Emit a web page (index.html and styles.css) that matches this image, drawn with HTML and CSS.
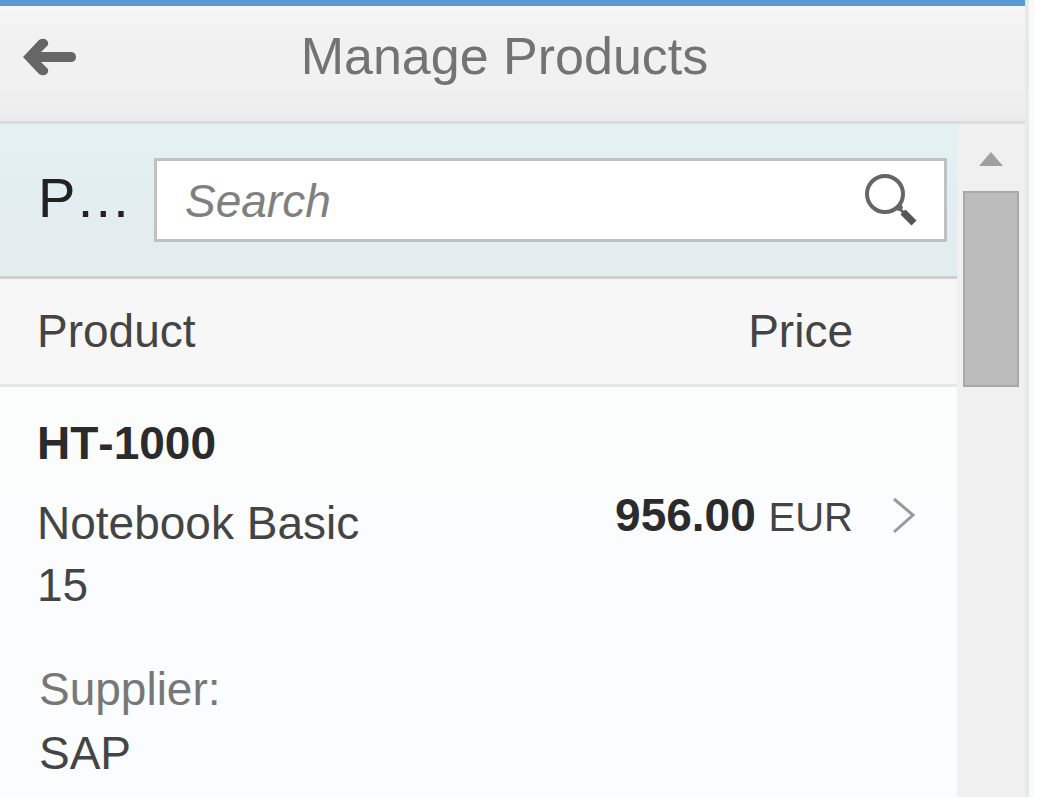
FILE: index.html
```html
<!DOCTYPE html>
<html lang="en">
<head>
<meta charset="utf-8">
<meta name="viewport" content="width=device-width, initial-scale=1">
<title>Manage Products</title>
<link rel="stylesheet" href="styles.css">
</head>
<body>
<div class="app">
  <header class="app-header">
    <button class="icon-button back" type="button" aria-label="Back">
      <svg width="56" height="40" viewBox="0 0 56 40" aria-hidden="true">
        <path d="M1 21L17 4Q20 2 23 3Q27 5 26 9L19 16H50Q54 17 54 21Q54 25 50 26H19L26 33Q27 37 23 39Q20 40 17 38Z" fill="#666"/>
      </svg>
    </button>
    <h1 class="title">Manage Products</h1>
  </header>
  <div class="body">
    <main class="content">
      <div class="toolbar">
        <h2 class="toolbar-title">P…</h2>
        <form class="search" role="search">
          <input class="search-input" type="search" placeholder="Search" aria-label="Search">
          <button class="icon-button" type="button" aria-label="Start search">
            <svg width="56" height="56" viewBox="0 0 56 56" aria-hidden="true">
              <circle cx="21" cy="22" r="18" fill="none" stroke="#666" stroke-width="4"/>
              <path d="M30 38L37 30L39 36L36 39Z" fill="#666"/>
              <path d="M35 36L40 41" stroke="#666" stroke-width="3"/>
              <path d="M39 40L50 51" stroke="#555" stroke-width="7"/>
            </svg>
          </button>
        </form>
      </div>
      <table class="products">
        <thead>
          <tr>
            <th class="col-product" scope="col">Product</th>
            <th class="col-price" scope="col">Price</th>
            <td class="col-nav"></td>
          </tr>
        </thead>
        <tbody>
          <tr>
            <td class="col-product">
              <div class="product-id">HT-1000</div>
              <div class="product-name">Notebook Basic 15</div>
            </td>
            <td class="col-price"><span class="amount">956.00</span> <span class="currency">EUR</span></td>
            <td class="col-nav">
              <button class="icon-button" type="button" aria-label="Open HT-1000">
                <svg width="28" height="40" viewBox="0 0 28 40" aria-hidden="true">
                  <path d="M3 3L22 19L3 36" fill="none" stroke="#999" stroke-width="3"/>
                </svg>
              </button>
            </td>
          </tr>
          <tr>
            <td class="supplier" colspan="3">
              <div class="supplier-label">Supplier:</div>
              <div>SAP</div>
            </td>
          </tr>
        </tbody>
      </table>
    </main>
    <div class="scrollbar" aria-hidden="true">
      <svg class="scroll-arrow" width="24" height="14" viewBox="0 0 24 14"><path d="M0 14L12 0L24 14Z" fill="#a0a0a0"/></svg>
      <div class="scroll-thumb"></div>
    </div>
  </div>
</div>
</body>
</html>
```
FILE: styles.css
```css
* {
  box-sizing: border-box;
}

body {
  margin: 0;
  background: #fff;
  color: #444;
  font: 46px/62px "Liberation Sans", Arial, sans-serif;
}

.app {
  display: flex;
  flex-direction: column;
  min-height: calc(100vh - 3px);
  margin-right: 11px;
  border-right: 4px solid #e8eaea;
  box-shadow: 5px 0 #f7f9fb;
}

.app-header {
  display: grid;
  grid-template-columns: 80px 1fr 80px;
  align-items: center;
  height: 124px;
  padding: 0 16px 16px 22px;
  border-top: 6px solid #5b9bd5;
  border-bottom: 3px solid #dcdcdc;
  background: linear-gradient(#f6f6f6, #f1f1f1 30%, #f1f1f1 70%, #ebebeb);
}

.title,
.toolbar-title {
  margin: 0;
  font-weight: 400;
}

.title {
  padding-right: 22px;
  color: #737373;
  font-size: 52px;
  text-align: center;
}

.icon-button {
  display: block;
  padding: 0;
  border: 0;
  background: none;
}

.icon-button svg {
  display: block;
}

.body {
  display: flex;
  flex: 1;
}

.content {
  flex: 1;
  background: linear-gradient(#fbfdfc 260px, #fafcfd 400px);
}

.toolbar {
  display: flex;
  align-items: center;
  gap: 20px;
  height: 155px;
  padding: 0 10px 0 38px;
  border-bottom: 3px solid #cdd0d1;
  background: linear-gradient(#e4f0f2, #e3ecef);
}

.toolbar-title {
  width: 96px;
  padding-bottom: 4px;
  color: #222;
  font-size: 56px;
}

.search {
  display: flex;
  flex: 1;
  align-items: center;
  height: 84px;
  padding-right: 24px;
  border: 3px solid #bfc2c3;
  background: #fff;
}

.search-input {
  flex: 1;
  min-width: 0;
  padding: 2px 0 0 28px;
  border: 0;
  outline: 0;
  background: none;
  color: #444;
  font: inherit;
}

.search-input::placeholder {
  color: #808080;
  font-style: italic;
}

.products {
  width: 100%;
  border-collapse: collapse;
  table-layout: fixed;
}

.products th,
.products td {
  padding: 0;
  font-weight: 400;
  text-align: left;
}

.products thead tr {
  height: 106px;
  border-bottom: 3px solid #e6e6e6;
  background: #f7f7f7;
}

.products .col-product {
  width: 42%;
  padding-left: 37px;
}

.products .col-price {
  text-align: right;
}

.products .col-nav {
  width: 104px;
  padding-left: 38px;
}

.products tbody .col-price,
.products tbody .col-nav {
  padding-top: 30px;
}

.products tbody .col-product {
  padding-top: 25px;
}

.product-id {
  margin-bottom: 18px;
  color: #2b2b2b;
  font-kerning: none;
  font-weight: 700;
}

.amount {
  color: #2b2b2b;
  font-weight: 700;
}

.currency {
  font-size: 40px;
}

.products .supplier {
  padding: 42px 0 6px 39px;
}

.supplier-label {
  margin-bottom: 2px;
  color: #777;
}

.scrollbar {
  display: flex;
  flex-direction: column;
  align-items: center;
  gap: 25px;
  width: 68px;
  padding-top: 28px;
  background: #f0f0f0;
}

.scroll-thumb {
  width: 56px;
  height: 196px;
  border: 2px solid #a8a8a8;
  background: #bcbcbc;
}
```
